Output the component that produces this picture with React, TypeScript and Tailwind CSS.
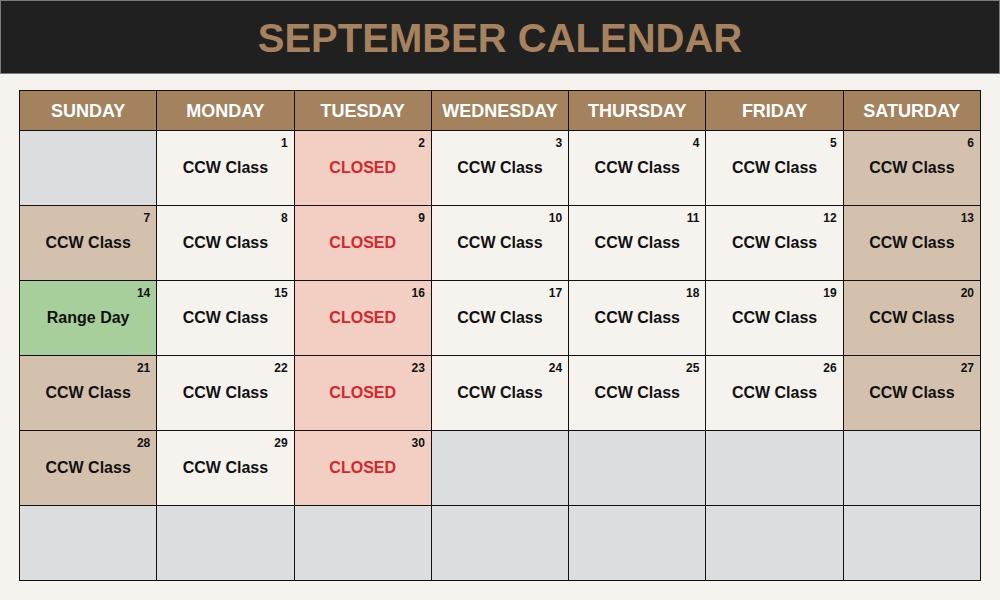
import React from "react";

type Kind = "empty" | "class" | "weekend" | "closed" | "range";

type DayCell = {
  day?: number;
  kind: Kind;
  label?: string;
};

const DAYS = [
  "SUNDAY",
  "MONDAY",
  "TUESDAY",
  "WEDNESDAY",
  "THURSDAY",
  "FRIDAY",
  "SATURDAY",
];

const bgFor: Record<Kind, string> = {
  empty: "bg-[#dcdddf]",
  class: "bg-[#f6f3ef]",
  weekend: "bg-[#d4c1ad]",
  closed: "bg-[#f2cfc2]",
  range: "bg-[#a6cf9b]",
};

// September: starts on Monday, 30 days
const buildCells = (): DayCell[] => {
  const cells: DayCell[] = [{ kind: "empty" }];
  for (let d = 1; d <= 30; d++) {
    const col = d % 7; // 0 = Sunday
    if (d === 14) {
      cells.push({ day: d, kind: "range", label: "Range Day" });
    } else if (col === 2) {
      cells.push({ day: d, kind: "closed", label: "CLOSED" });
    } else if (col === 0 || col === 6) {
      cells.push({ day: d, kind: "weekend", label: "CCW Class" });
    } else {
      cells.push({ day: d, kind: "class", label: "CCW Class" });
    }
  }
  while (cells.length < 42) cells.push({ kind: "empty" });
  return cells;
};

const Cell: React.FC<{ cell: DayCell }> = ({ cell }) => (
  <div className={`relative h-[74px] flex items-center justify-center ${bgFor[cell.kind]}`}>
    {cell.day && (
      <span className="absolute top-[3px] right-[6px] text-[12px] font-bold text-[#111]">
        {cell.day}
      </span>
    )}
    {cell.label && (
      <span
        className={`text-[16px] font-bold ${
          cell.kind === "closed" ? "text-[#d8262c]" : "text-[#111]"
        }`}
      >
        {cell.label}
      </span>
    )}
  </div>
);

export default function App() {
  const cells = buildCells();
  return (
    <div
      className="w-[1000px] h-[600px] bg-[#f6f3ef] flex flex-col"
      style={{ fontFamily: '"Liberation Sans", Arial, sans-serif' }}
    >
      <div className="h-[74px] bg-[#202020] border border-[#7c7c7c] flex items-center justify-center">
        <h1 className="text-[40px] font-bold text-[#a6835e] leading-none pt-[2px]">
          SEPTEMBER CALENDAR
        </h1>
      </div>
      <div className="pt-[16px] pl-[19px]">
        <div className="w-[962px] grid grid-cols-7 gap-px bg-[#111] border border-[#111]">
          {DAYS.map((d) => (
            <div
              key={d}
              className="h-[39px] bg-[#a5825e] flex items-center justify-center text-white text-[18px] font-bold pt-[1px]"
            >
              {d}
            </div>
          ))}
          {cells.map((c, i) => (
            <Cell key={i} cell={c} />
          ))}
        </div>
      </div>
    </div>
  );
}
